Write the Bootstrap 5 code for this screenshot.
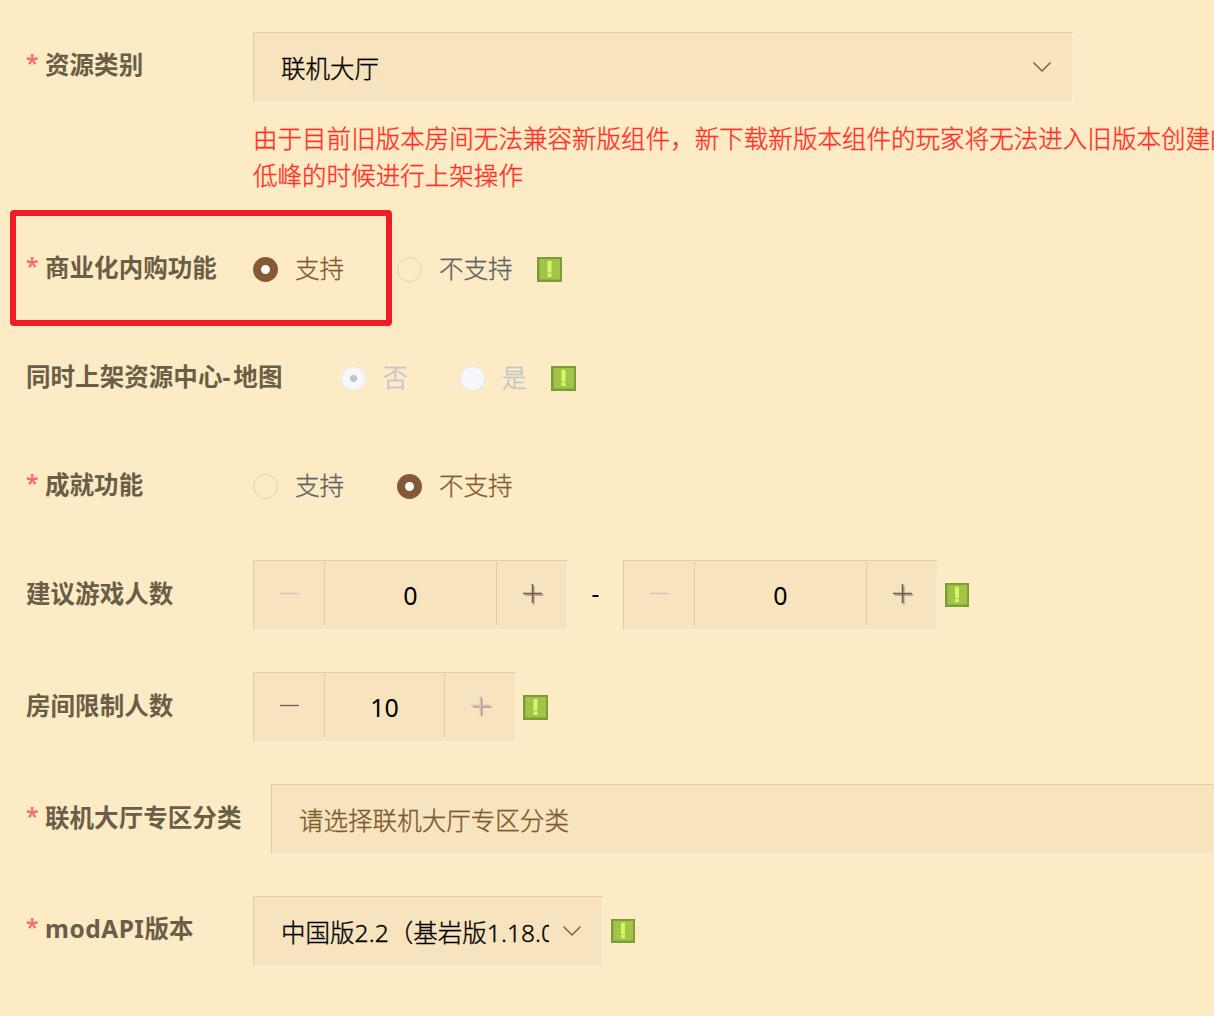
<!DOCTYPE html>
<html lang="zh-CN">
<head>
<meta charset="utf-8">
<meta name="viewport" content="width=device-width, initial-scale=1">
<title>资源设置</title>
<link href="https://cdn.jsdelivr.net/npm/bootstrap@5.3.0/dist/css/bootstrap.min.css" rel="stylesheet">
<style>
body{background:#fdebc5;font-family:"Noto Sans","Noto Sans CJK SC",sans-serif;font-size:24.5px;line-height:36.75px;color:#606266;overflow:hidden;height:1016px}
.settings{padding:32px 0 0 26px;width:1214px}
.form-line{height:70px}
.field-name{width:227px;font-weight:700;color:#6b5e47;padding-bottom:4px;letter-spacing:.06px}
.number-line .field-name,.zone-line .field-name{padding-bottom:2px}
.option-line .field-name{padding-bottom:2px}
.star{width:19px;color:#f56c6c;font-weight:600;font-size:23px;margin-top:-2px}
.thin{font-weight:300;-webkit-text-stroke:.35px currentColor;letter-spacing:.04px}
.well-box{height:70px;background:#f7e3bd;border:1px solid;border-color:#e5cf98 #fdefd3 #fdefd3 #e5cf98;color:#000}
.select-box{padding:4px 20px 0 27px}
.select-box svg{margin-top:-5px}
.notice{padding-left:227px;color:#ff3029;margin-top:19px;height:73px}
.dot{width:25px;height:25px;border:1px solid #e8d2a0;border-radius:50%;margin-right:17px}
.dot.on{border:8.5px solid #835a33;background:#fff}
.dot.off{border-color:#e9ebee;background:#f5f7fa}
.dot.off.on{border:1px solid #e9ebee;background:radial-gradient(circle,#c0c4cc 3.2px,#f5f7fa 3.9px)}
.brown{color:#835a33}
.dimmed{color:#c0c4cc}
.steel{color:#606266}
.tip{width:25px;height:25px}
.tip-small{width:24px;height:24px;margin-bottom:1px}
.step-btn{width:70px}
.step-btn svg{margin:-3px 0 0 2px}
.step-value{height:63px;margin-top:1px;border:solid #e5cf98;border-width:0 1px;padding-top:3px;font-size:25px}
.red-frame{left:10px;top:210px;width:382px;height:116px;border:6.5px solid #ef1c24;border-radius:4px}
.w820{width:820px}.w315{width:315px}.w263{width:263px}.w350{width:350px}
</style>
<script src="https://cdn.jsdelivr.net/npm/bootstrap@5.3.0/dist/js/bootstrap.bundle.min.js"></script>
</head>
<body>
<svg class="d-none">
  <symbol id="tip" viewBox="0 0 25 25"><path fill="#7a9e37" d="M0 0h25v25H0z"/><path fill="#a3c349" d="M2 2h21v21H2z"/><path fill="#8fb23f" d="M2 2h1v21H2zM2 22h21v1H2z"/><path fill="#d3fb69" d="M10.500 4h4v11.500h-4zM10.500 16.500h4v3.500h-4z"/></symbol>
  <symbol id="minus" viewBox="0 0 22 22"><path d="M1 10.500h19" stroke="currentColor" stroke-width="1.300"/></symbol>
  <symbol id="plus" viewBox="0 0 22 22"><path d="M3 12h18.500M11.800 3v18.500" stroke="#b99a74" stroke-width="1.500"/><path d="M1 10.500h19M10.500 1v19" stroke="currentColor" stroke-width="1.500"/></symbol>
  <symbol id="down" viewBox="0 0 20 12"><path d="M1.500 1.500 10 10l8.500-8.500" fill="none" stroke="#7b6341" stroke-width="1.500"/></symbol>
</svg>
<main class="settings">
  <div class="form-line d-flex align-items-center">
    <div class="field-name d-flex flex-shrink-0"><span class="star">*</span>资源类别</div>
    <div class="well-box select-box w820 d-flex align-items-center justify-content-between thin">联机大厅<svg width="20" height="12"><use href="#down"/></svg></div>
  </div>
  <div class="notice text-nowrap thin">由于目前旧版本房间无法兼容新版组件，新下载新版本组件的玩家将无法进入旧版本创建的<br>低峰的时候进行上架操作</div>

  <div class="form-line option-line d-flex align-items-center" style="margin-top:40px">
    <div class="field-name d-flex flex-shrink-0"><span class="star">*</span>商业化内购功能</div>
    <span class="dot on"></span><span class="thin brown" style="width:102px">支持</span>
    <span class="dot"></span><span class="thin" style="width:98px">不支持</span>
    <svg class="tip"><use href="#tip"/></svg>
  </div>
  <div class="form-line option-line d-flex align-items-center" style="margin-top:39px">
    <div class="field-name text-nowrap flex-shrink-0" style="width:315px">同时上架资源中心<span style="letter-spacing:3px">-</span>地图</div>
    <span class="dot off on"></span><span class="thin dimmed" style="width:77px">否</span>
    <span class="dot off"></span><span class="thin dimmed" style="width:49px">是</span>
    <svg class="tip"><use href="#tip"/></svg>
  </div>
  <div class="form-line option-line d-flex align-items-center" style="margin-top:38px">
    <div class="field-name d-flex flex-shrink-0"><span class="star">*</span>成就功能</div>
    <span class="dot"></span><span class="thin" style="width:102px">支持</span>
    <span class="dot on"></span><span class="thin brown">不支持</span>
  </div>

  <div class="form-line number-line d-flex align-items-center" style="margin-top:39px">
    <div class="field-name flex-shrink-0">建议游戏人数</div>
    <div class="well-box w315 d-flex">
      <span class="step-btn dimmed d-flex align-items-center justify-content-center"><svg width="22" height="22"><use href="#minus"/></svg></span>
      <span class="step-value flex-fill d-flex align-items-center justify-content-center">0</span>
      <span class="step-btn steel d-flex align-items-center justify-content-center"><svg width="22" height="22"><use href="#plus"/></svg></span>
    </div>
    <span class="text-center text-black" style="width:55px;margin-top:-2px">-</span>
    <div class="well-box w315 d-flex">
      <span class="step-btn dimmed d-flex align-items-center justify-content-center"><svg width="22" height="22"><use href="#minus"/></svg></span>
      <span class="step-value flex-fill d-flex align-items-center justify-content-center">0</span>
      <span class="step-btn steel d-flex align-items-center justify-content-center"><svg width="22" height="22"><use href="#plus"/></svg></span>
    </div>
    <svg class="tip tip-small" style="margin-left:7px"><use href="#tip"/></svg>
  </div>

  <div class="form-line number-line d-flex align-items-center" style="margin-top:42px">
    <div class="field-name flex-shrink-0">房间限制人数</div>
    <div class="well-box w263 d-flex">
      <span class="step-btn steel d-flex align-items-center justify-content-center"><svg width="22" height="22"><use href="#minus"/></svg></span>
      <span class="step-value flex-fill d-flex align-items-center justify-content-center">10</span>
      <span class="step-btn dimmed d-flex align-items-center justify-content-center"><svg width="22" height="22"><use href="#plus"/></svg></span>
    </div>
    <svg class="tip" style="margin-left:7px"><use href="#tip"/></svg>
  </div>

  <div class="form-line zone-line d-flex align-items-center" style="margin-top:42px">
    <div class="field-name d-flex flex-shrink-0" style="width:245px"><span class="star">*</span>联机大厅专区分类</div>
    <div class="well-box select-box flex-fill border-end-0 d-flex align-items-center thin" style="color:#7a5a2e">请选择联机大厅专区分类</div>
  </div>

  <div class="form-line d-flex align-items-center" style="margin-top:42px">
    <div class="field-name d-flex flex-shrink-0"><span class="star">*</span><span style="letter-spacing:.5px">modAPI</span>版本</div>
    <div class="well-box select-box w350 d-flex align-items-center justify-content-between thin"><span class="overflow-hidden text-nowrap" style="width:268px">中国版2.2（基岩版1.18.0）</span><svg width="20" height="12"><use href="#down"/></svg></div>
    <svg class="tip tip-small" style="margin-left:8px"><use href="#tip"/></svg>
  </div>
</main>
<div class="red-frame position-absolute"></div>
</body>
</html>
